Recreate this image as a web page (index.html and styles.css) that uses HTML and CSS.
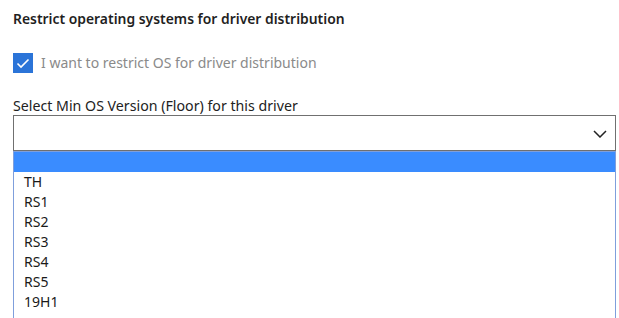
FILE: index.html
```html
<!DOCTYPE html>
<html lang="en">
<head>
    <meta charset="UTF-8">
    <title>Driver distribution</title>
    <link rel="stylesheet" href="styles.css">
</head>
<body>
    <div class="panel">
        <h2 class="title">Restrict operating systems for driver distribution</h2>

        <label class="check-row">
            <span class="checkbox">
                <svg width="20" height="20" viewBox="0 0 20 20">
                    <path d="M4.5 10.5 L8 14 L15.5 6.5" fill="none" stroke="#fff" stroke-width="1.6"/>
                </svg>
            </span>
            <span class="check-text">I want to restrict OS for driver distribution</span>
        </label>

        <div class="field-label">Select Min OS Version (Floor) for this driver</div>
        <div class="select">
            <svg class="chevron" width="14" height="8" viewBox="0 0 14 8">
                <path d="M1 1 L7 7 L13 1" fill="none" stroke="#222" stroke-width="1.5"/>
            </svg>
        </div>

        <ul class="options">
            <li class="selected">&nbsp;</li>
            <li>TH</li>
            <li>RS1</li>
            <li>RS2</li>
            <li>RS3</li>
            <li>RS4</li>
            <li>RS5</li>
            <li>19H1</li>
        </ul>
    </div>
</body>
</html>
```

FILE: styles.css
```css
body {
    margin: 0;
    padding: 0;
    background-color: #fff;
    font-family: "Noto Sans", "Open Sans", sans-serif;
    color: #222;
    overflow: hidden;
}
.panel {
    padding: 9px 3px 0 13px;
}
.title {
    margin: 0;
    font-size: 13.9px;
    font-weight: 600;
    line-height: 20px;
    color: #1f1f1f;
}
.check-row {
    display: flex;
    align-items: center;
    gap: 8px;
    margin-top: 24px;
    height: 20px;
}
.checkbox {
    width: 20px;
    height: 20px;
    background-color: #2b74d8;
    display: flex;
}
.check-text {
    font-size: 14px;
    line-height: 20px;
    color: #8a8a8a;
}
.field-label {
    margin-top: 23px;
    font-size: 14.2px;
    line-height: 19px;
    color: #222;
}
.select {
    height: 34px;
    border: 1px solid #707070;
    display: flex;
    justify-content: flex-end;
    align-items: center;
    padding-right: 8px;
}
.chevron {
    margin-top: 1px;
}
.options {
    list-style: none;
    margin: 0;
    padding: 0;
    height: 180px;
    border: 1px solid #7f9fdc;
    border-bottom: none;
}
.options li {
    height: 20px;
    line-height: 20px;
    font-size: 14px;
    padding-left: 10px;
    color: #1a1a1a;
}
.options .selected {
    background-color: #3a8cff;
}
```
